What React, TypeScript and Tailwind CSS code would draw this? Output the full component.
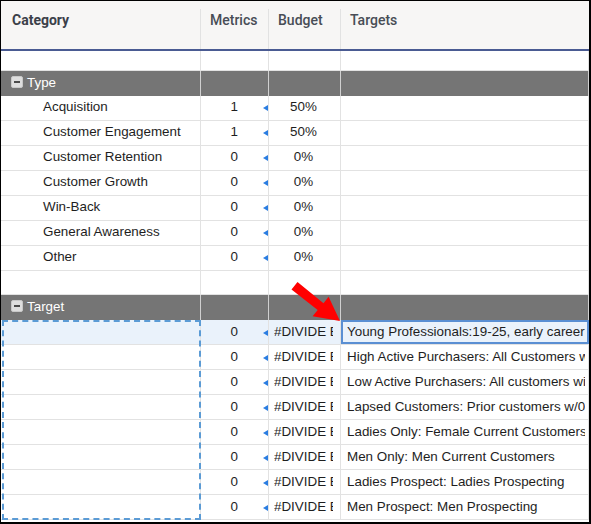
import React from "react";

const typeRows: [string, string, string][] = [
  ["Acquisition", "1", "50%"],
  ["Customer Engagement", "1", "50%"],
  ["Customer Retention", "0", "0%"],
  ["Customer Growth", "0", "0%"],
  ["Win-Back", "0", "0%"],
  ["General Awareness", "0", "0%"],
  ["Other", "0", "0%"],
];

const targetRows: string[] = [
  "Young Professionals:19-25, early career",
  "High Active Purchasers: All Customers with 3+ purchases",
  "Low Active Purchasers: All customers with 1-2 purchases",
  "Lapsed Customers: Prior customers w/0 purchases",
  "Ladies Only: Female Current Customers",
  "Men Only: Men Current Customers",
  "Ladies Prospect: Ladies Prospecting",
  "Men Prospect: Men Prospecting",
];

function Tri({ top }: { top: string }) {
  return (
    <svg width="5" height="6" viewBox="0 0 5 6" className={`absolute right-0 ${top}`}>
      <polygon points="5,0 5,6 0,3" fill="#2a7de1" />
    </svg>
  );
}

function DataRow({
  cat,
  metric,
  budget,
  target,
  selected,
  indent,
}: {
  cat: string;
  metric: string;
  budget: string;
  target: string;
  selected?: boolean;
  indent?: boolean;
}) {
  return (
    <div
      className={`flex h-[25px] border-b border-[#e2e2e2] text-[13.4px] text-[#1e1e1e] ${
        indent ? "leading-[22px]" : "leading-[24px]"
      } ${selected ? "bg-[#eaf2fb]" : ""}`}
    >
      <div className={`w-[200px] shrink-0 border-r border-[#e2e2e2] ${indent ? "pl-[42px]" : ""} whitespace-nowrap overflow-hidden`}>
        {cat}
      </div>
      <div className="relative w-[68px] shrink-0 border-r border-[#e2e2e2] pr-[30px] text-right">
        {metric}
        <Tri top={indent ? "top-[9px]" : "top-[10px]"} />
      </div>
      <div className="w-[72px] shrink-0 border-r border-[#e2e2e2] pl-[5px] pr-[7px]">
        <div className="overflow-hidden whitespace-nowrap text-center">{budget}</div>
      </div>
      <div className="relative w-[248px] shrink-0 border-r border-[#e2e2e2] pl-[6px] pr-[3px]">
        <div className="overflow-hidden whitespace-nowrap">{target}</div>
        {selected && <div className="absolute inset-0 border-2 border-[#5a8fd3] right-[-1px]" />}
      </div>
    </div>
  );
}

function EmptyRow({ h }: { h: string }) {
  return (
    <div className={`flex ${h} border-b border-[#e2e2e2]`}>
      <div className="w-[200px] shrink-0 border-r border-[#e2e2e2]" />
      <div className="w-[68px] shrink-0 border-r border-[#e2e2e2]" />
      <div className="w-[72px] shrink-0 border-r border-[#e2e2e2]" />
      <div className="w-[248px] shrink-0 border-r border-[#e2e2e2]" />
    </div>
  );
}

function Band({ label }: { label: string }) {
  return (
    <div className="flex h-[25px] bg-[#757575] text-[13.4px] leading-[23px] text-white">
      <div className="flex w-[200px] shrink-0 items-start border-r border-[#d0d0d0] pl-[10px]">
        <div className="mt-[5px] flex h-[12px] w-[12px] items-center justify-center rounded-[2px] bg-[#dedede] border border-[#c8c8c8]">
          <div className="h-[2px] w-[6px] bg-[#4a4a4a]" />
        </div>
        <span className="ml-[4px]">{label}</span>
      </div>
      <div className="w-[68px] shrink-0 border-r border-[#d0d0d0]" />
      <div className="w-[72px] shrink-0 border-r border-[#d0d0d0]" />
      <div className="w-[248px] shrink-0 border-r border-[#d0d0d0]" />
    </div>
  );
}

export default function App() {
  return (
    <div
      className="relative h-[524px] w-[591px] overflow-hidden border-t border-l border-r-2 border-b-2 border-black bg-white"
      style={{ fontFamily: '"Liberation Sans", Arial, sans-serif' }}
    >
      {/* header */}
      <div
        className="flex h-[50px] border-b-2 border-[#4a5b92] bg-[#f7f6f5] text-[14px] leading-[20px]"
        style={{ fontFamily: 'Roboto, "Liberation Sans", sans-serif' }}
      >
        <div className="w-[200px] shrink-0 pt-[8px]">
          <div className="h-full border-r border-[#e2e2e2] pl-[11px] pt-[1px] font-bold text-[#3b4049]">Category</div>
        </div>
        <div className="w-[68px] shrink-0 pt-[8px]">
          <div className="h-full border-r border-[#e2e2e2] pl-[9px] pt-[1px] font-medium text-[#484d56]">Metrics</div>
        </div>
        <div className="w-[72px] shrink-0 pt-[8px]">
          <div className="h-full border-r border-[#e2e2e2] pl-[9px] pt-[1px] font-medium text-[#484d56]">Budget</div>
        </div>
        <div className="w-[248px] shrink-0 pt-[8px]">
          <div className="h-full pl-[9px] pt-[1px] font-medium text-[#484d56]">Targets</div>
        </div>
      </div>

      <EmptyRow h="h-[20px]" />
      <Band label="Type" />
      {typeRows.map(([c, m, b]) => (
        <DataRow key={c} cat={c} metric={m} budget={b} target="" indent />
      ))}
      <EmptyRow h="h-[24px]" />
      <Band label="Target" />
      {targetRows.map((t, i) => (
        <DataRow key={t} cat="" metric="0" budget="#DIVIDE BY ZERO" target={t} selected={i === 0} />
      ))}

      {/* dashed selection */}
      <div className="pointer-events-none absolute left-[1px] top-[319px] h-[200px] w-[199px] border-2 border-dashed border-[#5b9bd5]" />

      {/* red arrow */}
      <svg
        className="pointer-events-none absolute left-0 top-0"
        width="588"
        height="521"
        viewBox="1 1 588 521"
      >
        <polygon
          points="297.5,282 323.5,303.2 328.6,296.8 340,321 312.6,316.2 317.7,310 291.5,289.6"
          fill="#ff0000"
        />
      </svg>
    </div>
  );
}
